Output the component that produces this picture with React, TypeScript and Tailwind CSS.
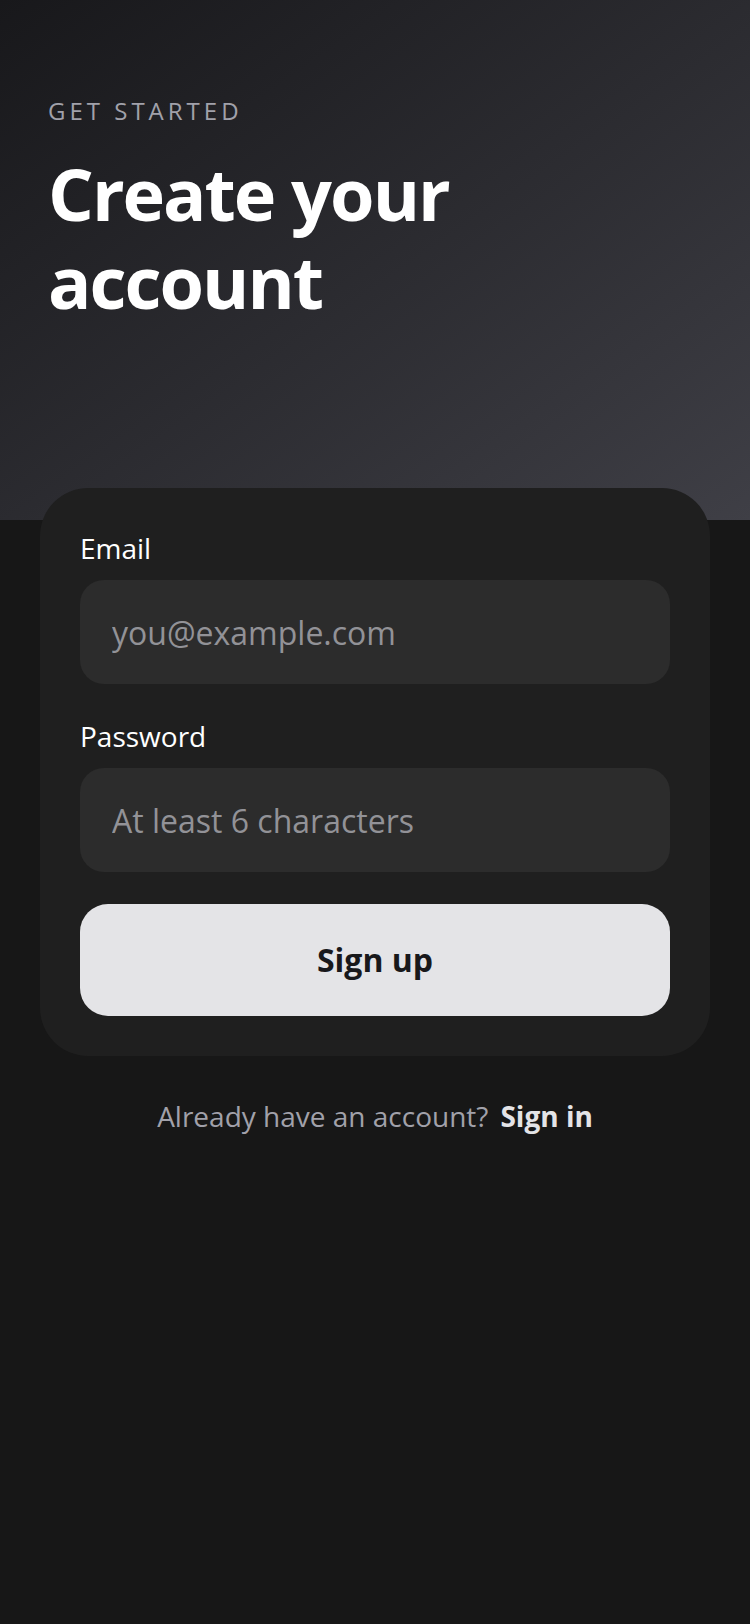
import { useState } from "react";

const font = { fontFamily: '"Open Sans", "Noto Sans", sans-serif' };

export default function App() {
  const [email, setEmail] = useState("");
  const [password, setPassword] = useState("");

  return (
    <div className="min-h-[1624px] w-full bg-[#171717]" style={font}>
      {/* Header */}
      <div className="h-[520px] bg-gradient-to-br from-[#18181b] to-[#3f3f46] px-12 pt-[95px]">
        <p className="text-[24px] leading-8 tracking-[4px] text-[#a1a1aa]">GET STARTED</p>
        <h1 className="mt-[22px] text-[72px] font-bold leading-[88px] tracking-[-2px] text-white">
          Create your
          <br />
          account
        </h1>
      </div>

      {/* Card */}
      <div className="-mt-8 mx-10 rounded-[48px] bg-[#1f1f1f] p-10">
        <label className="block text-[28px] leading-10 text-white">Email</label>
        <input
          type="email"
          value={email}
          onChange={(e) => setEmail(e.target.value)}
          placeholder="you@example.com"
          className="mt-3 h-[104px] w-full rounded-[24px] bg-[#2c2c2c] px-8 text-[32px] text-white outline-none placeholder:text-[#929297]"
        />

        <label className="mt-8 block text-[28px] leading-10 text-white">Password</label>
        <input
          type="password"
          value={password}
          onChange={(e) => setPassword(e.target.value)}
          placeholder="At least 6 characters"
          className="mt-3 h-[104px] w-full rounded-[24px] bg-[#2c2c2c] px-8 text-[32px] text-white outline-none placeholder:text-[#929297]"
        />

        <button className="mt-8 h-[112px] w-full rounded-[28px] bg-[#e4e4e7] text-[32px] font-bold text-[#18181b]">
          Sign up
        </button>
      </div>

      {/* Footer */}
      <div className="mt-10 flex items-center justify-center gap-3 text-[28px] leading-10">
        <span className="text-[#a1a1aa]">Already have an account?</span>
        <button className="font-bold text-[#e4e4e7]">Sign in</button>
      </div>
    </div>
  );
}
